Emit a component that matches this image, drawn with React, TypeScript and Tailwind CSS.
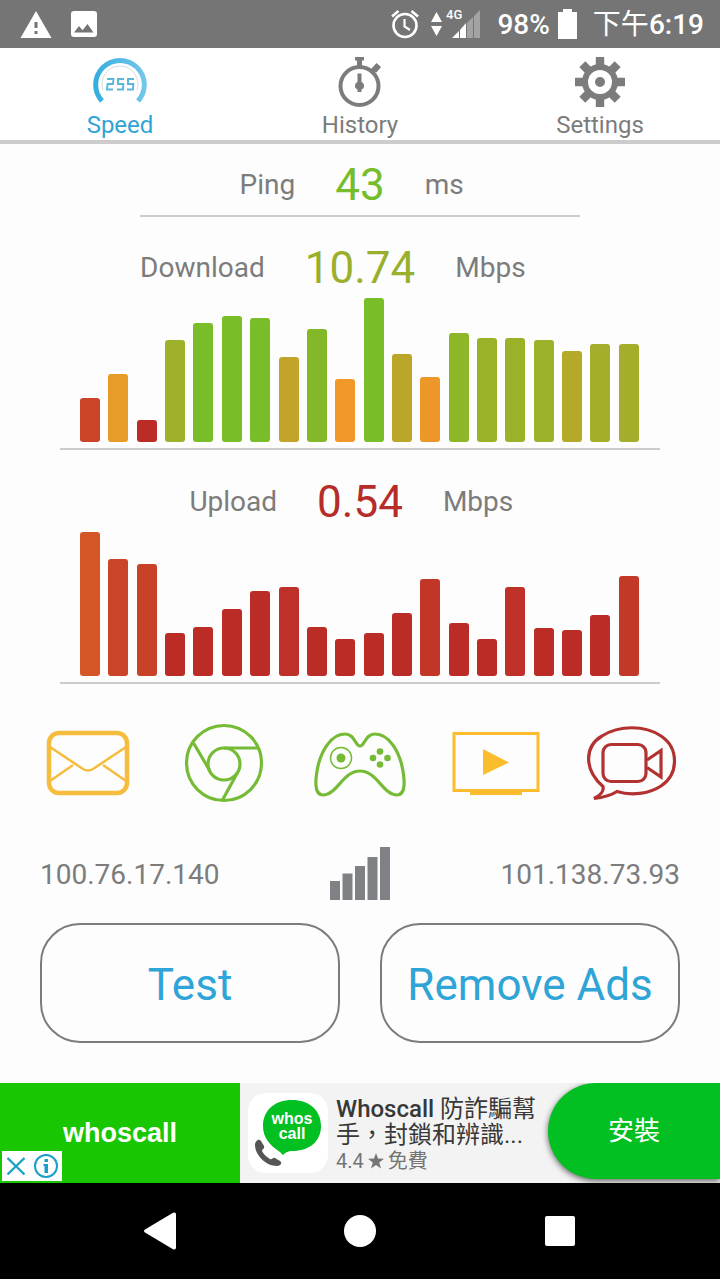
import React from 'react';

interface Bar {
    height: number;
    color: string;
}

const downloadBars: Bar[] = [
    { height: 44, color: '#cb4428' },
    { height: 68, color: '#e79b28' },
    { height: 22, color: '#bb2c27' },
    { height: 102, color: '#9fb12a' },
    { height: 119, color: '#79bd29' },
    { height: 126, color: '#79bd29' },
    { height: 124, color: '#79bd29' },
    { height: 85, color: '#c3a42a' },
    { height: 113, color: '#83b929' },
    { height: 63, color: '#f29729' },
    { height: 144, color: '#79bd29' },
    { height: 88, color: '#bba62a' },
    { height: 65, color: '#ee9729' },
    { height: 109, color: '#8eb629' },
    { height: 104, color: '#99b22a' },
    { height: 104, color: '#99b22a' },
    { height: 102, color: '#9db12a' },
    { height: 91, color: '#b5a92a' },
    { height: 98, color: '#a5ae2a' },
    { height: 98, color: '#a5ae2a' },
];

const uploadBars: Bar[] = [
    { height: 144, color: '#d55728' },
    { height: 117, color: '#ca4429' },
    { height: 112, color: '#c84228' },
    { height: 43, color: '#bb2c27' },
    { height: 49, color: '#bb2c27' },
    { height: 67, color: '#bb2c27' },
    { height: 85, color: '#bb2c27' },
    { height: 89, color: '#be3028' },
    { height: 49, color: '#bb2c27' },
    { height: 37, color: '#bb2c27' },
    { height: 43, color: '#bb2c27' },
    { height: 63, color: '#bb2c27' },
    { height: 97, color: '#c23628' },
    { height: 53, color: '#bb2c27' },
    { height: 37, color: '#bb2c27' },
    { height: 89, color: '#be3028' },
    { height: 48, color: '#bb2c27' },
    { height: 46, color: '#bb2c27' },
    { height: 61, color: '#bb2c27' },
    { height: 100, color: '#c33928' },
];

function StatusBar() {
    return (
        <header className="flex h-12 items-center justify-between bg-[#757575] pl-5 pr-4 text-white">
            <div className="flex items-center gap-[19px]">
                <svg width="32" height="28" viewBox="0 0 32 28" fill="currentColor">
                    <path d="M16 1 31.500 28H.5Z" />
                    <path d="M14.500 12h3v6h-3zM14.500 21h3v3h-3z" fill="#757575" />
                </svg>
                <svg width="26" height="26" viewBox="0 0 26 26" fill="currentColor">
                    <rect width="26" height="26" rx="3" />
                    <path d="M3 21.500 8 15l3.500 4.200L16.500 13l6 8.500z" fill="#757575" />
                </svg>
            </div>
            <div className="flex items-center text-[28px] leading-[46px] font-medium">
                <svg className="mr-3" width="28" height="30" viewBox="0 0 28 30" fill="none" stroke="currentColor" strokeWidth="2.600">
                    <circle cx="14" cy="16.500" r="11.500" />
                    <path d="M13.500 10v7.500l5.500 3.500" strokeWidth="2.200" />
                    <path d="M1 7.500 7.500 2M20.500 2 27 7.500" />
                </svg>
                <svg className="mr-1" width="11" height="24" viewBox="0 0 11 24" fill="currentColor">
                    <path d="M5.500 0 11 10H0zM5.500 24 0 14h11z" />
                </svg>
                <svg className="mr-4" width="35" height="36" viewBox="0 0 35 36">
                    <text x="0" y="13" fill="#fff" fontSize="13" fontWeight="500" fontFamily="Roboto, sans-serif">4G</text>
                    <path d="M6 32h7v-7z" fill="#fff" />
                    <path d="M14 32h6V17l-6 7z" fill="#fff" />
                    <path d="M21 32h6V11l-6 6zM28 32h6V4l-6 6z" fill="#a3a3a3" />
                </svg>
                <span className="pt-[2px]">98%</span>
                <svg className="ml-2 mr-4" width="19" height="30" viewBox="0 0 19 30" fill="currentColor">
                    <path d="M5 0h9v3h5v27H0V3h5z" />
                </svg>
                <span className="pt-[2px]">
                    <span className="font-normal">下午</span>6:19
                </span>
            </div>
        </header>
    );
}

function SpeedIcon() {
    return (
        <svg width="54" height="50" viewBox="0 0 54 50" fill="none">
            <defs>
                <linearGradient id="gauge" x1="0" y1="0" x2="1" y2="0">
                    <stop offset="0" stopColor="#35aee0" />
                    <stop offset="1" stopColor="#72c8ea" />
                </linearGradient>
            </defs>
            <path d="M9 44A24.300 24.300 0 1 1 45 44" stroke="url(#gauge)" strokeWidth="5" />
            <path d="M10 33A18 18 0 1 1 44 33" stroke="#d3dbe8" strokeWidth="1" />
            {/* seven segment 255 */}
            <g stroke="#5bb8dd" strokeWidth="2">
                <path d="M14 22h6.500l-.6 5h-5.300L14 32.500h6" />
                <path d="M31 22h-6v5h5.300l-.3 5.500h-6" />
                <path d="M41 22h-6v5h5.300l-.3 5.500h-6" />
            </g>
        </svg>
    );
}

function HistoryIcon() {
    return (
        <svg width="44" height="50" viewBox="0 0 44 50" fill="#7c7c7c">
            <path d="M17 0h9v3.500h-2V9h-5V3.500h-2z" />
            <circle cx="21.500" cy="29" r="19" fill="none" stroke="#7c7c7c" strokeWidth="4" />
            <path d="m33 12 5.500-6 4.500 4-4.500 5.500-2-.5-2 2.500-3.500-3z" />
            <path d="M19.500 16.500h4V25c2 1 2.500 2.500 2.500 4s-.5 2.500-2.500 3.500V35h-4v-2.500C17.500 31.500 17 30.500 17 29s.5-3 2.500-4z" />
        </svg>
    );
}

function SettingsIcon() {
    return (
        <svg width="50" height="50" viewBox="0 0 50 50" fill="#7c7c7c">
            {[0, 45, 90, 135].map(angle => (
                <path key={angle} d="M20.800 0h8.400v50h-8.400z" transform={`rotate(${angle} 25 25)`} />
            ))}
            <circle cx="25" cy="25" r="18" />
            <circle cx="25" cy="25" r="12" fill="#fff" />
            <circle cx="25" cy="25" r="5" />
        </svg>
    );
}

function Tabs() {
    const tabs = [
        { name: 'Speed', icon: <SpeedIcon />, active: true },
        { name: 'History', icon: <HistoryIcon />, active: false },
        { name: 'Settings', icon: <SettingsIcon />, active: false },
    ];

    return (
        <nav className="grid h-24 grid-cols-3 border-b-4 border-[#cccccc] bg-white">
            {tabs.map(tab => (
                <button
                    key={tab.name}
                    type="button"
                    className={`flex flex-col items-center gap-1 pt-[9px] text-2xl leading-7 ${tab.active ? 'text-[#2fa4d6]' : 'text-[#7c7c7c]'}`}
                >
                    {tab.icon}
                    <span>{tab.name}</span>
                </button>
            ))}
        </nav>
    );
}

interface ReadingProps {
    label: string;
    value: string;
    unit: string;
    color: string;
}

function Reading({ label, value, unit, color }: ReadingProps) {
    return (
        <div className="grid grid-cols-[1fr_auto_1fr] items-center gap-10 text-[28px] leading-[52px]">
            <span className="text-right">{label}</span>
            <span className={`text-[44px] ${color}`}>{value}</span>
            <span>{unit}</span>
        </div>
    );
}

function BarChart({ bars }: { bars: Bar[] }) {
    return (
        <div className="mx-[60px] flex h-[156px] items-end justify-between border-b-2 border-[#cccccc] pr-[21px] pb-[6px] pl-5">
            {bars.map((bar, i) => (
                <div key={i} className="w-5 rounded-[3px]" style={{ height: bar.height, backgroundColor: bar.color }} />
            ))}
        </div>
    );
}

function ServiceIcons() {
    return (
        <div className="grid h-20 grid-cols-5 place-items-center px-5">
            <svg width="88" height="80" viewBox="0 0 88 80" fill="none" stroke="#f6bc3d">
                <rect x="5" y="10" width="78" height="60" rx="10" strokeWidth="4.500" />
                <path d="M6 24 39 46q5 3 10 0L82 24M6 58l23-16M82 58 59 42" strokeWidth="2.500" />
            </svg>
            <svg width="80" height="80" viewBox="0 0 80 80" fill="none" stroke="#75bb36" strokeWidth="3.200">
                <circle cx="40" cy="40" r="37.500" />
                <circle cx="40" cy="41" r="16" />
                <path d="M40 25h34M9.500 20 26 48M53.500 49.500 38.500 77" />
            </svg>
            <svg width="92" height="80" viewBox="0 0 92 80" fill="none" stroke="#75bb36" strokeWidth="3.200">
                <path d="M46 23c5 0 5-12 15-12 15 0 24 19 27 32 3 14 4 29-5 29-14 0-20-24-37-24S23 72 9 72c-9 0-8-15-5-29 3-13 12-32 27-32 10 0 10 12 15 12z" />
                <circle cx="27" cy="35" r="10.500" strokeWidth="1.500" />
                <g fill="#75bb36" stroke="none">
                    <circle cx="27" cy="35" r="4.500" />
                    <circle cx="66" cy="28.500" r="3.300" />
                    <circle cx="59" cy="35" r="3.300" />
                    <circle cx="73.500" cy="35" r="3.300" />
                    <circle cx="66" cy="41.500" r="3.300" />
                </g>
            </svg>
            <svg width="88" height="80" viewBox="0 0 88 80" fill="none" stroke="#fbbd2e">
                <path d="M2 10.500h84v57H2z" strokeWidth="3" />
                <path d="M18 68h52v4H18zM31 26l26 13.500L31 52z" fill="#fbbd2e" stroke="none" />
            </svg>
            <svg width="90" height="80" viewBox="0 0 90 80" fill="none" stroke="#b23232" strokeWidth="3.200">
                <path d="M7 75.500c8-4 10-8 9-12C-4 46-2 23 15 13 32 2 58 2 74 13c18 12 18 38 0 50-12 8-30 10-44 5.500-7 4.500-13 6-23 7z" />
                <rect x="16" y="21.500" width="43" height="37" rx="8" />
                <path d="M60 37 74 27.500v26.500L60 44.500" />
            </svg>
        </div>
    );
}

function NetworkInfo() {
    return (
        <div className="grid grid-cols-[1fr_auto_1fr] items-center px-10 text-[28px]">
            <span className="pt-[2px]">100.76.17.140</span>
            <svg width="60" height="54" viewBox="0 0 60 54" fill="#808184">
                <path d="M0 34h10v19H0zM12.500 26.500h10V53h-10zM25 19h10v34H25zM37.500 10h10v43h-10zM50 0h10v53H50z" />
            </svg>
            <span className="pt-[2px] text-right">101.138.73.93</span>
        </div>
    );
}

function AdBanner() {
    return (
        <aside className="flex h-[100px] overflow-hidden bg-[#f3f3f3]">
            <div className="relative flex w-1/3 items-center justify-center bg-[#18c702]">
                <span className="font-['Liberation_Sans',sans-serif] text-[27px] font-bold text-white">whoscall</span>
                <div className="absolute bottom-[2px] left-[2px] flex h-[30px] w-[60px] items-center justify-around bg-white text-[#1aa0c4]">
                    <button type="button" aria-label="Close ad">
                        <svg width="20" height="20" viewBox="0 0 20 20" stroke="currentColor" strokeWidth="2.400">
                            <path d="m1.500 2 17 16.500m0-16.500-17 16.500" />
                        </svg>
                    </button>
                    <button type="button" aria-label="Ad info">
                        <svg width="26" height="26" viewBox="0 0 26 26" fill="none" stroke="currentColor" strokeWidth="2">
                            <circle cx="13" cy="13" r="11" />
                            <path d="M11.500 6h3.500v3h-3.500zM10.500 11H15v9h-3.500v-7h-1z" fill="currentColor" stroke="none" />
                        </svg>
                    </button>
                </div>
            </div>
            <div className="flex min-w-0 flex-1 items-center gap-2 pl-2">
                <svg className="shrink-0" width="80" height="80" viewBox="0 0 80 80">
                    <rect width="80" height="80" rx="18" fill="#fff" />
                    <path d="M44 7c17 0 29 10 29 26 0 15-11 25-29 25-4 0-6 1-9 4l-3-3C21 52 15 44 15 33 15 17 27 7 44 7z" fill="#02bf22" />
                    <path d="M7 52c0-4 4-7 6-4l3 5c1 3-2 3-2 5 2 4 5 6 8 8 2 1 3-2 5-1l5 3c3 2 0 5-3 5C18 73 7 62 7 52z" fill="#555" />
                    <g fill="#fff" fontFamily="Liberation Sans, sans-serif" fontSize="16" fontWeight="700" textAnchor="middle">
                        <text x="44" y="31">whos</text>
                        <text x="44" y="46">call</text>
                    </g>
                </svg>
                <div className="min-w-0 flex-1 pt-1 text-2xl leading-[26px] text-[#383838]">
                    <p>
                        <span className="font-medium">Whoscall</span> 防詐騙幫
                        <br />
                        手，封鎖和辨識...
                    </p>
                    <p className="flex items-center gap-1 text-[20px] text-[#757575]">
                        4.4
                        <svg width="16" height="16" viewBox="0 0 16 16" fill="currentColor">
                            <path d="m8 0 2 5.600 6 .2-4.800 3.600L13 15.500 8 12l-5 3.500 1.800-6.100L0 5.800l6-.2z" />
                        </svg>
                        免費
                    </p>
                </div>
            </div>
            <button
                type="button"
                className="h-24 w-[172px] shrink-0 rounded-l-full bg-[#02bf22] text-[26px] text-white shadow-[0_2px_6px_rgba(0,0,0,0.6)]"
            >
                安裝
            </button>
        </aside>
    );
}

function NavigationBar() {
    return (
        <footer className="flex h-24 items-center justify-center gap-[168px] bg-black text-white">
            <button type="button" aria-label="Back">
                <svg width="32" height="38" viewBox="0 0 32 38" fill="currentColor">
                    <path d="M1 17.500 29 .8q3-1 3 1.700v33q0 2.700-3 1.700L1 20.500q-2-1.500 0-3z" />
                </svg>
            </button>
            <button type="button" aria-label="Home" className="size-8 rounded-full bg-white" />
            <button type="button" aria-label="Recent apps">
                <svg width="32" height="32" viewBox="0 0 32 32" fill="currentColor">
                    <rect x="1" y="1" width="30" height="30" rx="2" />
                </svg>
            </button>
        </footer>
    );
}

export default function App() {
    return (
        <div className="flex min-h-screen flex-col bg-[#fdfdfd] font-[Roboto,'Noto_Sans_CJK_TC',sans-serif] text-[#7c7c7c]">
            <StatusBar />
            <Tabs />
            <main className="flex flex-1 flex-col">
                <div className="mx-[140px] border-b-2 border-[#cccccc] pt-[15px] pb-1">
                    <Reading label="Ping" value="43" unit="ms" color="text-[#75bd2b]" />
                </div>
                <section className="pt-[25px]">
                    <Reading label="Download" value="10.74" unit="Mbps" color="text-[#9aaf2c]" />
                    <BarChart bars={downloadBars} />
                </section>
                <section className="pt-[26px]">
                    <Reading label="Upload" value="0.54" unit="Mbps" color="text-[#b62c28]" />
                    <BarChart bars={uploadBars} />
                </section>
                <div className="pt-[39px]">
                    <ServiceIcons />
                </div>
                <div className="pt-11">
                    <NetworkInfo />
                </div>
                <div className="grid grid-cols-2 gap-10 px-10 pt-[22px] pb-10 text-[44px] text-[#2fa4d6]">
                    <button type="button" className="h-[120px] rounded-[40px] border-2 border-[#7c7c7c] pt-1">Test</button>
                    <button type="button" className="h-[120px] rounded-[40px] border-2 border-[#7c7c7c] pt-1">Remove Ads</button>
                </div>
            </main>
            <AdBanner />
            <NavigationBar />
        </div>
    );
}
